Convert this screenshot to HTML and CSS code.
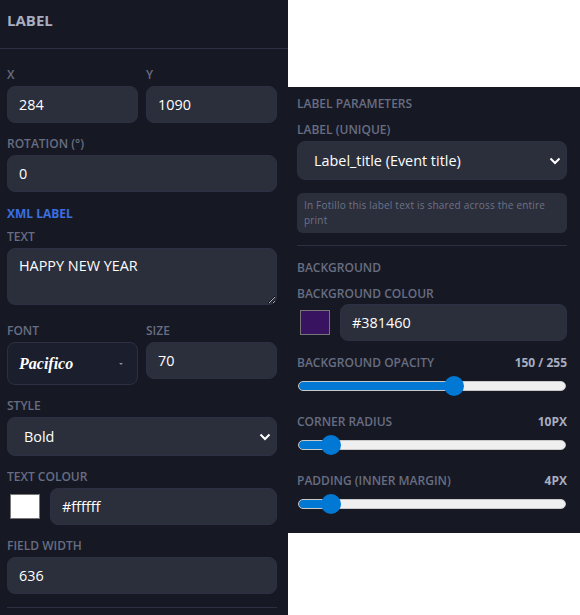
FILE: index.html
```html
<!DOCTYPE html>
<html lang="en">
<head>
    <meta charset="UTF-8">
    <meta name="viewport" content="width=device-width, initial-scale=1.0">
    <title>Label editor</title>
    <link rel="stylesheet" href="styles.css">
</head>
<body>
    <div class="page">
        <aside class="panel panel-left">
            <div class="panel-header">LABEL</div>
            <div class="panel-body">
                <div class="row">
                    <div class="field">
                        <label class="field-label">X</label>
                        <input class="text-input" type="text" value="284">
                    </div>
                    <div class="field">
                        <label class="field-label">Y</label>
                        <input class="text-input" type="text" value="1090">
                    </div>
                </div>
                <div class="field">
                    <label class="field-label">ROTATION (°)</label>
                    <input class="text-input" type="text" value="0">
                </div>
                <div class="section-title">XML LABEL</div>
                <div class="field">
                    <label class="field-label">TEXT</label>
                    <textarea class="text-input text-area">HAPPY NEW YEAR</textarea>
                </div>
                <div class="row row-font">
                    <div class="field">
                        <label class="field-label">FONT</label>
                        <div class="font-picker">
                            <span class="font-name">Pacifico</span>
                            <span class="font-caret"></span>
                        </div>
                    </div>
                    <div class="field">
                        <label class="field-label">SIZE</label>
                        <input class="text-input" type="text" value="70">
                    </div>
                </div>
                <div class="field">
                    <label class="field-label">STYLE</label>
                    <select class="select-input">
                        <option>Bold</option>
                    </select>
                </div>
                <div class="field">
                    <label class="field-label">TEXT COLOUR</label>
                    <div class="colour-row">
                        <span class="swatch swatch-white"></span>
                        <input class="text-input" type="text" value="#ffffff">
                    </div>
                </div>
                <div class="field">
                    <label class="field-label">FIELD WIDTH</label>
                    <input class="text-input" type="text" value="636">
                </div>
                <div class="divider"></div>
            </div>
        </aside>

        <aside class="panel panel-right">
            <div class="field-label params-title">LABEL PARAMETERS</div>
            <div class="field">
                <label class="field-label">LABEL (UNIQUE)</label>
                <select class="select-input">
                    <option>Label_title (Event title)</option>
                </select>
            </div>
            <div class="note">In Fotillo this label text is shared across the entire print</div>
            <div class="divider"></div>
            <div class="field-label params-title bg-title">BACKGROUND</div>
            <div class="field">
                <label class="field-label">BACKGROUND COLOUR</label>
                <div class="colour-row">
                    <span class="swatch swatch-purple"></span>
                    <input class="text-input" type="text" value="#381460">
                </div>
            </div>
            <div class="slider-field">
                <div class="slider-head">
                    <span class="field-label">BACKGROUND OPACITY</span>
                    <span class="slider-value">150 / 255</span>
                </div>
                <input class="slider" type="range" min="0" max="255" value="150" style="--fill: 58.8%">
            </div>
            <div class="slider-field">
                <div class="slider-head">
                    <span class="field-label">CORNER RADIUS</span>
                    <span class="slider-value">10PX</span>
                </div>
                <input class="slider" type="range" min="0" max="110" value="10" style="--fill: 10%">
            </div>
            <div class="slider-field">
                <div class="slider-head">
                    <span class="field-label">PADDING (INNER MARGIN)</span>
                    <span class="slider-value">4PX</span>
                </div>
                <input class="slider" type="range" min="0" max="44" value="4" style="--fill: 10%">
            </div>
        </aside>
    </div>
</body>
</html>
```

FILE: styles.css
```css
* {
    box-sizing: border-box;
}
html, body {
    height: 100%;
}
body {
    margin: 0;
    background: #fff;
    font-family: "Open Sans", "Noto Sans", sans-serif;
    overflow: hidden;
}
.page {
    display: flex;
    align-items: flex-start;
}
.panel {
    background: #161923;
    color: #fff;
}
.panel-left {
    width: 288px;
    height: 615px;
    overflow: hidden;
}
.panel-header {
    height: 49px;
    padding: 11px 7px 0;
    font-size: 15px;
    line-height: 18px;
    font-weight: 700;
    color: #a8adc0;
    border-bottom: 1px solid #2d3044;
}
.panel-body {
    padding: 18px 11px 0 7px;
    display: flex;
    flex-direction: column;
    gap: 13px;
}
.row {
    display: grid;
    grid-template-columns: 1fr 1fr;
    gap: 8px;
}
.row-font {
    margin-top: 5px;
    align-items: start;
}
.field {
    display: flex;
    flex-direction: column;
    gap: 3px;
    min-width: 0;
}
.field-label {
    font-size: 12px;
    line-height: 16px;
    font-weight: 600;
    color: #686d82;
}
.text-input,
.select-input {
    width: 100%;
    height: 37px;
    padding: 0 11px;
    border: 1px solid #2d3044;
    border-radius: 8px;
    background: #2b2e3b;
    color: #fff;
    font-family: inherit;
    font-size: 14.4px;
}
.text-area {
    height: 57px;
    padding: 7px 11px;
    line-height: 20px;
    resize: vertical;
    display: block;
}
.select-input {
    height: 39px;
    padding: 0 16px;
    appearance: none;
    background-image: url("data:image/svg+xml,%3Csvg xmlns='http://www.w3.org/2000/svg' width='12' height='8' viewBox='0 0 12 8'%3E%3Cpath d='M1.5 1.5 6 6l4.5-4.5' fill='none' stroke='%23fff' stroke-width='2'/%3E%3C/svg%3E");
    background-repeat: no-repeat;
    background-position: right 5px center;
}
.section-title {
    margin-top: 1px;
    margin-bottom: -6px;
    font-size: 12px;
    line-height: 16px;
    font-weight: 700;
    color: #3b6fe0;
}
.font-picker {
    height: 43px;
    padding: 0 11px;
    display: flex;
    align-items: center;
    justify-content: space-between;
    background: #1b1e2c;
    border: 1px solid #2d3044;
    border-radius: 8px;
}
.font-name {
    font-family: "Liberation Serif", serif;
    font-style: italic;
    font-weight: 700;
    font-size: 16px;
}
.font-caret {
    width: 0;
    height: 0;
    margin-right: 3px;
    border-left: 2px solid transparent;
    border-right: 2px solid transparent;
    border-top: 2px solid #8a8ea0;
}
.colour-row {
    display: flex;
    align-items: center;
    gap: 10px;
}
.swatch {
    flex: none;
    width: 30px;
    height: 25px;
    margin-left: 3px;
    border: 1px solid #767676;
}
.swatch-white {
    background: #fff;
}
.swatch-purple {
    background: #381460;
}
.divider {
    height: 1px;
    background: #2d3044;
}
.panel-right {
    width: 292px;
    height: 446px;
    margin-top: 87px;
    padding: 9px 13px 0 9px;
}
.panel-right .colour-row {
    margin-top: -1px;
}
.params-title {
    margin-bottom: 10px;
}
.note {
    margin-top: 13px;
    padding: 5px 7px;
    background: #2b2e3b;
    border-radius: 6px;
    font-size: 10px;
    line-height: 15px;
    letter-spacing: 0.2px;
    color: #6d7287;
}
.panel-right .divider {
    margin-top: 12px;
}
.bg-title {
    margin-top: 14px;
}
.slider-field {
    margin-top: 14px;
}
.slider-field + .slider-field {
    margin-top: 18px;
}
.slider-head {
    display: flex;
    justify-content: space-between;
    align-items: center;
}
.slider-value {
    font-size: 12px;
    line-height: 16px;
    font-weight: 700;
    color: #a8adc0;
}
.slider {
    display: block;
    width: calc(100% - 2px);
    height: 20px;
    margin: 5px 1px 0;
    appearance: none;
    background: none;
}
.slider::-webkit-slider-runnable-track {
    height: 10px;
    border-radius: 5px;
    border: 1px solid #c9c9c9;
    background: linear-gradient(to right, #0078d4 var(--fill), #efefef var(--fill));
}
.slider::-webkit-slider-thumb {
    appearance: none;
    width: 20px;
    height: 20px;
    margin-top: -6px;
    border-radius: 50%;
    background: #0078d4;
}
```
